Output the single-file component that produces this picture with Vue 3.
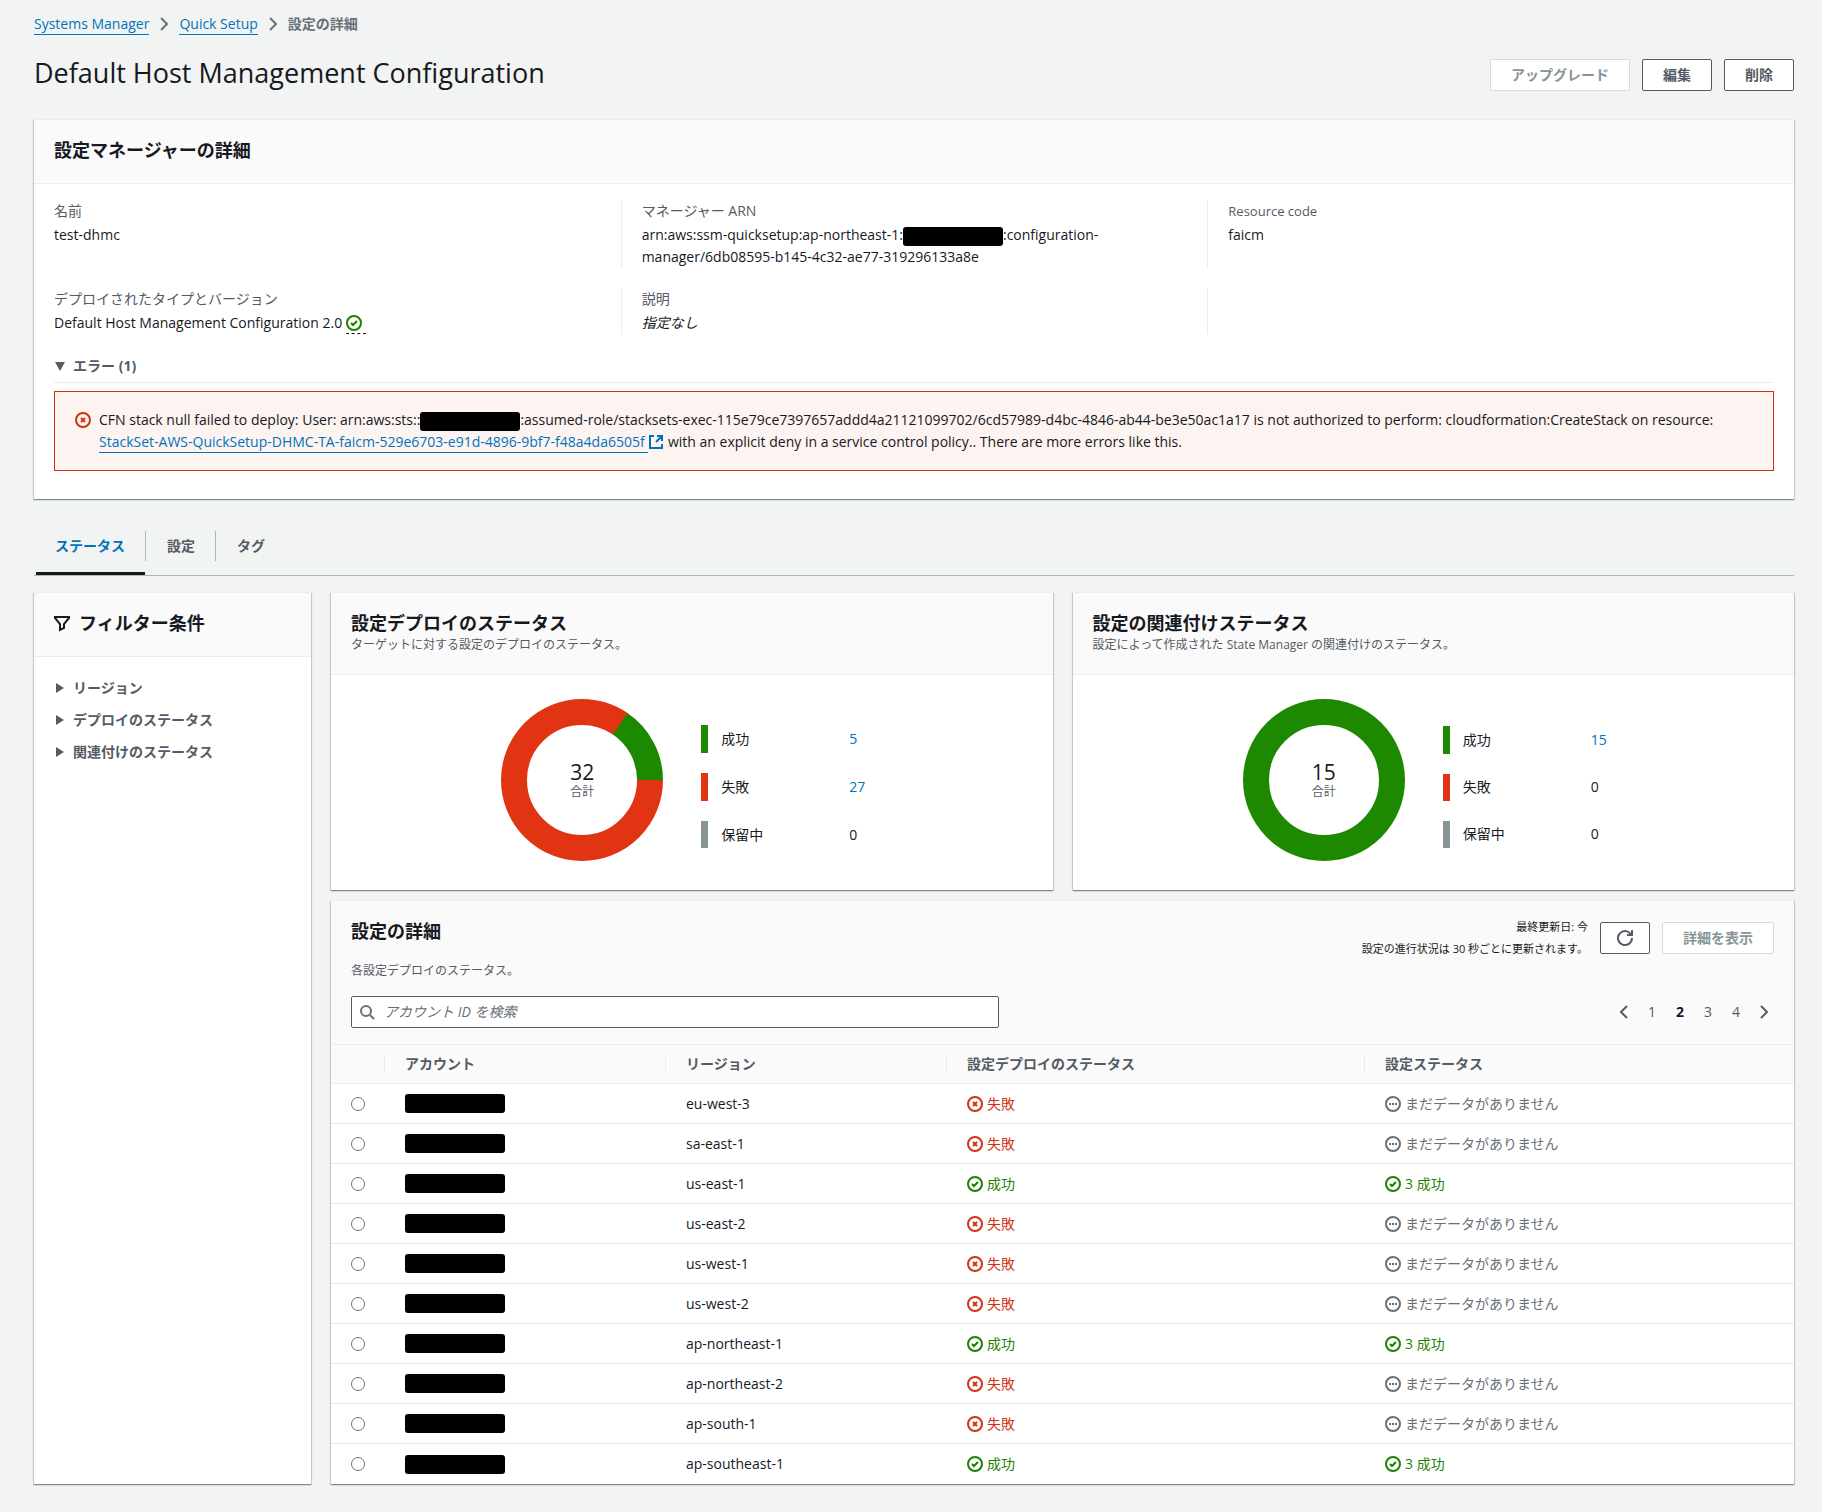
<script setup>
import { ref } from 'vue'

const search = ref('')
const selected = ref('')
const currentPage = ref(2)
const activeTab = ref('ステータス')

const tabs = ['ステータス', '設定', 'タグ']
const filters = ['リージョン', 'デプロイのステータス', '関連付けのステータス']
const pages = [1, 2, 3, 4]

const GREEN = '#1d8900'
const RED = '#e03412'
const GRAY = '#879596'

const charts = [
  {
    title: '設定デプロイのステータス',
    note: 'ターゲットに対する設定のデプロイのステータス。',
    total: 32,
    items: [
      { label: '成功', value: 5, color: GREEN },
      { label: '失敗', value: 27, color: RED },
      { label: '保留中', value: 0, color: GRAY },
    ],
  },
  {
    title: '設定の関連付けステータス',
    note: '設定によって作成された State Manager の関連付けのステータス。',
    total: 15,
    items: [
      { label: '成功', value: 15, color: GREEN },
      { label: '失敗', value: 0, color: RED },
      { label: '保留中', value: 0, color: GRAY },
    ],
  },
]

// Ring segments run counter-clockwise from the three o'clock position.
const CIRCUMFERENCE = 2 * Math.PI * 68
function segments(chart) {
  let start = 0
  return chart.items
    .filter((item) => item.value > 0)
    .map((item) => {
      const share = item.value / chart.total
      const segment = {
        color: item.color,
        dash: `${share * CIRCUMFERENCE} ${CIRCUMFERENCE}`,
        turn: `rotate(${-(start + share) * 360} 81 81)`,
      }
      start += share
      return segment
    })
}

const rows = [
  ['eu-west-3', false],
  ['sa-east-1', false],
  ['us-east-1', true],
  ['us-east-2', false],
  ['us-west-1', false],
  ['us-west-2', false],
  ['ap-northeast-1', true],
  ['ap-northeast-2', false],
  ['ap-south-1', false],
  ['ap-southeast-1', true],
].map(([region, ok]) => ({ region, ok }))
</script>

<template>
  <div class="page">
    <nav class="breadcrumb" aria-label="breadcrumb">
      <a href="#">Systems Manager</a>
      <svg class="icon crumb-arrow" viewBox="0 0 16 16"><path d="M5 2l6 6-6 6" /></svg>
      <a href="#">Quick Setup</a>
      <svg class="icon crumb-arrow" viewBox="0 0 16 16"><path d="M5 2l6 6-6 6" /></svg>
      <span class="crumb-current">設定の詳細</span>
    </nav>

    <header class="title-row">
      <h1>Default Host Management Configuration</h1>
      <div class="actions">
        <button type="button" class="btn" disabled>アップグレード</button>
        <button type="button" class="btn">編集</button>
        <button type="button" class="btn">削除</button>
      </div>
    </header>

    <section class="card manager">
      <div class="card-head"><h2>設定マネージャーの詳細</h2></div>
      <dl class="fields">
        <div class="field">
          <dt>名前</dt>
          <dd>test-dhmc</dd>
        </div>
        <div class="field">
          <dt>マネージャー ARN</dt>
          <dd>arn:aws:ssm-quicksetup:ap-northeast-1:<span class="redacted"></span>:configuration-manager/6db08595-b145-4c32-ae77-319296133a8e</dd>
        </div>
        <div class="field">
          <dt class="latin">Resource code</dt>
          <dd>faicm</dd>
        </div>
        <div class="field">
          <dt>デプロイされたタイプとバージョン</dt>
          <dd class="version">
            Default Host Management Configuration 2.0
            <button type="button" class="version-status" aria-label="成功">
              <svg class="icon ok" viewBox="0 0 16 16"><circle cx="8" cy="8" r="7" /><path d="M5 8l2 2 4-4" /></svg>
            </button>
          </dd>
        </div>
        <div class="field">
          <dt>説明</dt>
          <dd><em>指定なし</em></dd>
        </div>
        <div class="field"></div>
      </dl>
      <div class="errors">
        <button type="button" class="expander errors-toggle" aria-expanded="true">
          <svg class="caret" viewBox="0 0 12 12"><path d="M1 2h10L6 11z" /></svg>
          エラー (1)
        </button>
        <div class="alert" role="alert">
          <svg class="icon bad" viewBox="0 0 16 16"><circle cx="8" cy="8" r="7" /><path d="M10 6l-4 4M6 6l4 4" /></svg>
          <p>
            CFN stack null failed to deploy: User: arn:aws:sts::<span class="redacted"></span>:assumed-role/stacksets-exec-115e79ce7397657addd4a21121099702/6cd57989-d4bc-4846-ab44-be3e50ac1a17 is not authorized to perform: cloudformation:CreateStack on resource:
            <a href="#" class="stack-link"><span>StackSet-AWS-QuickSetup-DHMC-TA-faicm-529e6703-e91d-4896-9bf7-f48a4da6505f&nbsp;</span><svg class="icon" viewBox="0 0 16 16"><path d="M9 2h5v5M8 8l6-6M14 10v4H2V2h4" /></svg></a>
            with an explicit deny in a service control policy.. There are more errors like this.
          </p>
        </div>
      </div>
    </section>

    <div class="tabs" role="tablist">
      <button
        v-for="tab in tabs"
        :key="tab"
        type="button"
        role="tab"
        class="tab"
        :class="{ active: tab === activeTab }"
        :aria-selected="tab === activeTab"
        @click="activeTab = tab"
      >
        <span>{{ tab }}</span>
      </button>
    </div>

    <div class="columns">
      <aside class="card filters">
        <div class="card-head filter-head">
          <svg class="icon" viewBox="0 0 16 16"><path d="M1 2h14v1l-5 6v4l-4 2V9L1 3z" /></svg>
          <h2>フィルター条件</h2>
        </div>
        <div class="filter-list">
          <button v-for="f in filters" :key="f" type="button" class="expander" aria-expanded="false">
            <svg class="caret" viewBox="0 0 12 12"><path d="M2 1v10l8-5z" /></svg>
            {{ f }}
          </button>
        </div>
      </aside>

      <main class="main">
        <div class="charts">
          <section v-for="chart in charts" :key="chart.title" class="card">
            <div class="card-head">
              <h2>{{ chart.title }}</h2>
              <p class="note">{{ chart.note }}</p>
            </div>
            <div class="chart-body">
              <div class="donut">
                <svg viewBox="0 0 162 162">
                  <circle
                    v-for="s in segments(chart)"
                    :key="s.color"
                    cx="81"
                    cy="81"
                    r="68"
                    fill="none"
                    stroke-width="26"
                    :stroke="s.color"
                    :stroke-dasharray="s.dash"
                    :transform="s.turn"
                  />
                </svg>
                <div class="donut-label">
                  <strong>{{ chart.total }}</strong>
                  <span>合計</span>
                </div>
              </div>
              <ul class="legend">
                <li v-for="item in chart.items" :key="item.label" :class="{ linked: item.value > 0 }">
                  <i class="swatch" :style="{ background: item.color }"></i>
                  <span class="legend-label">{{ item.label }}</span>
                  <a v-if="item.value > 0" href="#">{{ item.value }}</a>
                  <span v-else>{{ item.value }}</span>
                </li>
              </ul>
            </div>
          </section>
        </div>

        <section class="card">
          <div class="table-head">
            <div class="table-title">
              <h2>設定の詳細</h2>
              <div class="table-actions">
                <p class="updated">最終更新日: 今<br />設定の進行状況は 30 秒ごとに更新されます。</p>
                <button type="button" class="btn btn-icon" aria-label="更新">
                  <svg class="icon" viewBox="0 0 16 16"><path d="M10 5h5V0" /><path d="M15 8a7 7 0 1 1-.7-3" /></svg>
                </button>
                <button type="button" class="btn" disabled>詳細を表示</button>
              </div>
            </div>
            <p class="note table-note">各設定デプロイのステータス。</p>
            <div class="tools">
              <label class="search">
                <svg class="icon" viewBox="0 0 16 16"><circle cx="7" cy="7" r="5" /><path d="M15 15l-4-4" /></svg>
                <input v-model="search" type="text" placeholder="アカウント ID を検索" aria-label="アカウント ID を検索" />
              </label>
              <nav class="pagination" aria-label="pagination">
                <button type="button" aria-label="前へ">
                  <svg class="icon" viewBox="0 0 16 16"><path d="M11 2L5 8l6 6" /></svg>
                </button>
                <button
                  v-for="p in pages"
                  :key="p"
                  type="button"
                  :class="{ current: p === currentPage }"
                  @click="currentPage = p"
                >{{ p }}</button>
                <button type="button" aria-label="次へ">
                  <svg class="icon" viewBox="0 0 16 16"><path d="M5 2l6 6-6 6" /></svg>
                </button>
              </nav>
            </div>
          </div>
          <table>
            <colgroup>
              <col class="c-radio" />
              <col class="c-account" />
              <col class="c-region" />
              <col class="c-deploy" />
              <col />
            </colgroup>
            <thead>
              <tr>
                <th></th>
                <th><span>アカウント</span></th>
                <th><span>リージョン</span></th>
                <th><span>設定デプロイのステータス</span></th>
                <th><span>設定ステータス</span></th>
              </tr>
            </thead>
            <tbody>
              <tr v-for="row in rows" :key="row.region">
                <td><input v-model="selected" type="radio" name="row" :value="row.region" :aria-label="row.region" /></td>
                <td><span class="redacted"></span></td>
                <td>{{ row.region }}</td>
                <td>
                  <span v-if="row.ok" class="status ok">
                    <svg class="icon" viewBox="0 0 16 16"><circle cx="8" cy="8" r="7" /><path d="M5 8l2 2 4-4" /></svg>成功
                  </span>
                  <span v-else class="status bad">
                    <svg class="icon" viewBox="0 0 16 16"><circle cx="8" cy="8" r="7" /><path d="M10 6l-4 4M6 6l4 4" /></svg>失敗
                  </span>
                </td>
                <td>
                  <span v-if="row.ok" class="status ok">
                    <svg class="icon" viewBox="0 0 16 16"><circle cx="8" cy="8" r="7" /><path d="M5 8l2 2 4-4" /></svg>3 成功
                  </span>
                  <span v-else class="status pending">
                    <svg class="icon" viewBox="0 0 16 16"><circle cx="8" cy="8" r="7" /><path d="M4 8h2M7 8h2M10 8h2" /></svg>まだデータがありません
                  </span>
                </td>
              </tr>
            </tbody>
          </table>
        </section>
      </main>
    </div>
  </div>
</template>

<style>
body {
  margin: 0;
  background: #f2f3f3;
}
</style>

<style scoped>
.page {
  box-sizing: border-box;
  padding: 13px 28px 28px 34px;
  color: #16191f;
  font-family: "Open Sans", "Noto Sans CJK JP", sans-serif;
  font-size: 14px;
  line-height: 22px;
}
.page *,
.page *::before,
.page *::after {
  box-sizing: border-box;
}
h1, h2, p, dl, dd, ul {
  margin: 0;
  padding: 0;
}
button {
  font-family: inherit;
  font-size: 14px;
  line-height: 22px;
  cursor: pointer;
}
a {
  color: #0073bb;
  text-decoration: none;
}
.latin {
  font-size: 13px;
}
.icon {
  width: 16px;
  height: 16px;
  flex: none;
  overflow: visible;
  fill: none;
  stroke: currentColor;
  stroke-width: 2;
}
.ok {
  color: #1d8102;
}
.bad {
  color: #d13212;
}
.pending {
  color: #687078;
}
.redacted {
  display: inline-block;
  width: 100px;
  height: 19px;
  border-radius: 3px;
  background: #000;
  vertical-align: middle;
}

.breadcrumb {
  display: flex;
  align-items: center;
  gap: 7px;
}
.breadcrumb a {
  height: 21px;
  border-bottom: 1px solid #0073bb;
  line-height: 20px;
}
.crumb-arrow {
  color: #687078;
}
.crumb-current {
  color: #687078;
  font-weight: 700;
}

.title-row {
  display: flex;
  align-items: flex-end;
  justify-content: space-between;
  padding: 20px 0 28px;
}
h1 {
  font-size: 27px;
  line-height: 36px;
  font-weight: 400;
}
.actions {
  display: flex;
  gap: 12px;
}
.btn {
  height: 32px;
  padding: 4px 20px;
  border: 1px solid #545b64;
  border-radius: 2px;
  background: #fff;
  color: #545b64;
  font-weight: 700;
}
.btn:disabled {
  border-color: #d5dbdb;
  color: #879596;
}
.btn-icon {
  display: flex;
  align-items: center;
  justify-content: center;
  width: 50px;
  padding: 0;
}

.card {
  border-top: 1px solid #eaeded;
  background: #fff;
  box-shadow: 0 1px 1px 0 rgba(0, 28, 36, 0.3), 1px 1px 1px 0 rgba(0, 28, 36, 0.15), -1px 1px 1px 0 rgba(0, 28, 36, 0.15);
}
.card-head {
  padding: 17px 20px 20px;
  border-bottom: 1px solid #eaeded;
  background: #fafafa;
}
h2 {
  font-size: 18px;
  line-height: 26px;
  font-weight: 700;
}
.note {
  color: #545b64;
  font-size: 12px;
  line-height: 18px;
}

.manager {
  padding-bottom: 28px;
}
.fields {
  display: grid;
  grid-template-columns: repeat(3, 1fr);
  row-gap: 20px;
  padding: 16px 0 20px;
}
.field {
  display: flex;
  flex-direction: column;
  gap: 2px;
  min-height: 46px;
  padding: 0 20px;
}
.field:not(:nth-child(3n + 1)) {
  border-left: 1px solid #eaeded;
}
dt {
  color: #545b64;
}
.version {
  display: flex;
  gap: 4px;
}
.version-status {
  display: flex;
  width: 20px;
  height: 22px;
  padding: 3px 0 0;
  border: 0;
  border-bottom: 1px dashed #16191f;
  background: none;
}
.errors {
  padding: 0 20px;
}
.expander {
  display: flex;
  align-items: center;
  gap: 7px;
  padding: 0;
  border: 0;
  background: none;
  color: #545b64;
  font-weight: 700;
  text-align: left;
}
.caret {
  width: 12px;
  height: 12px;
  fill: currentColor;
}
.errors-toggle {
  width: 100%;
  height: 29px;
  padding-bottom: 4px;
  border-bottom: 1px solid #eaeded;
}
.alert {
  display: flex;
  gap: 8px;
  margin-top: 8px;
  padding: 17px 20px;
  border: 1px solid #d13212;
  background: #fdf3f1;
}
.alert > .icon {
  margin-top: 3px;
}
.stack-link {
  display: inline-flex;
  align-items: center;
  white-space: nowrap;
  vertical-align: top;
}
.stack-link span {
  height: 22px;
  border-bottom: 1px solid #0073bb;
}

.tabs {
  display: flex;
  margin-top: 28px;
  padding-left: 2px;
  border-bottom: 1px solid #aab7b8;
}
.tab {
  padding: 4px 0 11px;
  border: 0;
  border-bottom: 3px solid transparent;
  background: none;
  color: #545b64;
  font-weight: 700;
}
.tab span {
  display: block;
  padding: 4px 20px 4px 19px;
}
.tab + .tab span {
  padding-left: 21px;
  border-left: 1px solid #aab7b8;
}
.tab.active {
  border-bottom-color: #16191f;
  color: #0073bb;
}

.columns {
  display: flex;
  gap: 20px;
  margin-top: 16px;
}
.filters {
  flex: 0 0 277px;
}
.filter-head {
  display: flex;
  align-items: center;
  gap: 9px;
}
.filter-list {
  display: flex;
  flex-direction: column;
  gap: 10px;
  padding: 20px;
}
.main {
  flex: 1;
  min-width: 0;
  display: flex;
  flex-direction: column;
  gap: 10px;
}
.charts {
  display: grid;
  grid-template-columns: 1fr 1fr;
  gap: 20px;
}
.chart-body {
  display: flex;
  justify-content: center;
  align-items: center;
  gap: 38px;
  padding: 24px 0 16px;
}
.donut {
  position: relative;
  width: 162px;
  height: 175px;
}
.donut svg {
  display: block;
  width: 162px;
  height: 162px;
}
.donut-label {
  position: absolute;
  inset: 0 0 12px;
  display: flex;
  flex-direction: column;
  align-items: center;
  justify-content: center;
}
.donut-label strong {
  font-size: 21px;
  line-height: 22px;
  font-weight: 400;
}
.donut-label span {
  color: #545b64;
  font-size: 12px;
  line-height: 18px;
}
.legend {
  display: flex;
  flex-direction: column;
  gap: 20px;
  width: 181px;
  list-style: none;
}
.legend li {
  display: flex;
  align-items: center;
  height: 27px;
}
.legend li.linked {
  height: 28px;
}
.swatch {
  align-self: stretch;
  width: 7px;
  margin-right: 13px;
}
.legend-label {
  width: 128px;
}

.table-head {
  padding: 17px 20px 16px;
  background: #fafafa;
}
.table-title {
  display: flex;
  justify-content: space-between;
  height: 44px;
}
.table-actions {
  display: flex;
  align-items: center;
  gap: 12px;
  height: 40px;
}
.updated {
  font-size: 11px;
  text-align: right;
}
.table-note {
  margin-bottom: 16px;
}
.tools {
  display: flex;
  align-items: center;
  justify-content: space-between;
}
.search {
  display: flex;
  align-items: center;
  gap: 9px;
  width: 648px;
  height: 32px;
  padding: 0 7px;
  border: 1px solid #545b64;
  border-radius: 2px;
  background: #fff;
  color: #687078;
}
.search input {
  flex: 1;
  padding: 0;
  border: 0;
  outline: 0;
  background: none;
  color: #16191f;
  font: inherit;
}
.search input::placeholder {
  color: #687078;
  font-style: italic;
  opacity: 1;
}
.pagination {
  display: flex;
  gap: 8px;
}
.pagination button {
  display: flex;
  align-items: center;
  justify-content: center;
  width: 20px;
  padding: 0;
  border: 0;
  background: none;
  color: #545b64;
}
.pagination .current {
  color: #16191f;
  font-weight: 700;
}

table {
  width: 100%;
  border-collapse: separate;
  border-spacing: 0;
  table-layout: fixed;
}
.c-radio {
  width: 53px;
}
.c-account,
.c-region {
  width: 281px;
}
.c-deploy {
  width: 418px;
}
th {
  height: 40px;
  padding: 0;
  border-top: 1px solid #eaeded;
  border-bottom: 1px solid #eaeded;
  background: #fafafa;
  color: #545b64;
  text-align: left;
}
th span {
  display: block;
  height: 20px;
  padding-left: 20px;
  border-left: 1px solid #eaeded;
  line-height: 20px;
}
td {
  height: 40px;
  padding: 0 0 0 21px;
  border-bottom: 1px solid #eaeded;
}
td:first-child {
  padding-left: 20px;
}
tbody tr:last-child td {
  border-bottom: 0;
}
td .redacted,
td input {
  display: block;
}
input[type="radio"] {
  appearance: none;
  width: 14px;
  height: 14px;
  margin: 0;
  border: 1px solid #687078;
  border-radius: 50%;
  background: #fff;
}
input[type="radio"]:checked {
  border: 4px solid #0073bb;
}
.status {
  display: flex;
  align-items: center;
  gap: 4px;
}
</style>
